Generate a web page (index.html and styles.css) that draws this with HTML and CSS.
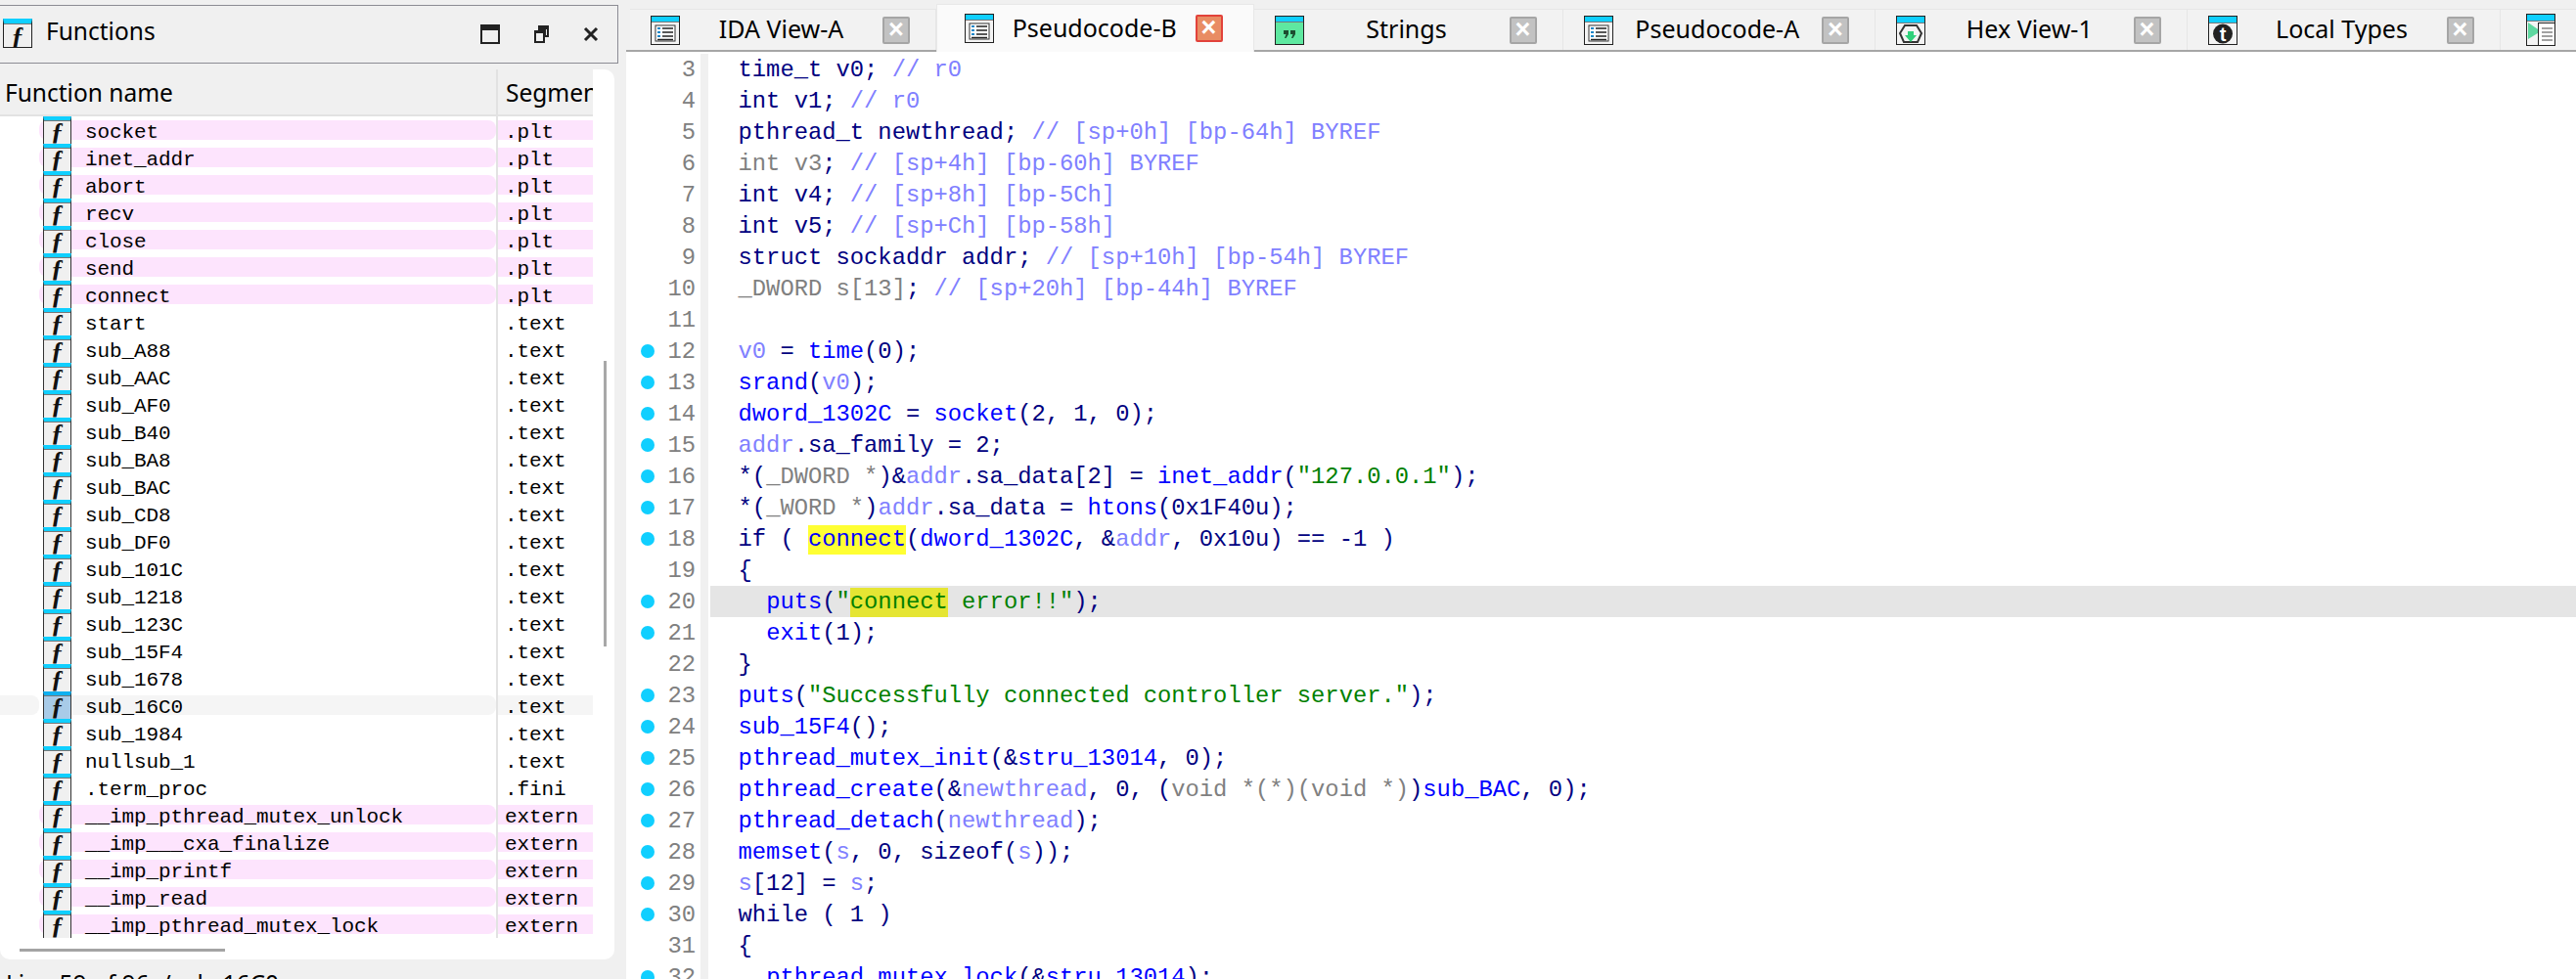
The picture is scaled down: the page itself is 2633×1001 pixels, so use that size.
FILE: index.html
```html
<!DOCTYPE html>
<html>
<head>
<meta name="viewport" content="width=device-width, initial-scale=1">
<title>Pseudocode-B</title>
<link rel="stylesheet" href="styles.css">
</head>
<body>

<svg class="defs" width="0" height="0">
  <symbol id="i-code" viewBox="0 0 30 30">
    <rect x=".5" y=".5" width="29" height="29" fill="#f4f4f4" stroke="#222"/>
    <rect x="1" y="1" width="28" height="5" fill="#10cfff"/>
    <rect x="1" y="6" width="28" height="1" fill="#777"/>
    <rect x="5" y="10" width="20" height="16" fill="#fff" stroke="#333"/>
    <path d="M7 13h3M7 17h3M7 21h3" stroke="#1a86c8" stroke-width="2"/>
    <path d="M12 13h11M12 17h11M12 21h11M7 24.500h16" stroke="#222" stroke-width="1.600"/>
  </symbol>
  <symbol id="i-str" viewBox="0 0 30 30">
    <rect x=".5" y=".5" width="29" height="29" fill="#5ee8a0" stroke="#222"/>
    <rect x="1" y="1" width="28" height="5" fill="#10cfff"/>
    <rect x="1" y="6" width="28" height="1" fill="#777"/>
    <path d="M9 15h5v4l-2.500 4H10l1.500-4H9zM16 15h5v4l-2.500 4H17l1.500-4H16z" fill="#1d4d30"/>
  </symbol>
  <symbol id="i-hex" viewBox="0 0 30 30">
    <rect x=".5" y=".5" width="29" height="29" fill="#f4f4f4" stroke="#222"/>
    <rect x="1" y="1" width="28" height="6" fill="#10cfff"/>
    <rect x="1" y="7" width="28" height="1" fill="#777"/>
    <path d="M9 10h12l5 8-4 9H8l-4-9z" fill="none" stroke="#333" stroke-width="2"/>
    <path d="M12 16h6v4h3l-6 7-6-7h3z" fill="#2fd07a"/>
  </symbol>
  <symbol id="i-type" viewBox="0 0 30 30">
    <rect x=".5" y=".5" width="29" height="29" fill="#f4f4f4" stroke="#222"/>
    <rect x="1" y="1" width="28" height="6" fill="#10cfff"/>
    <rect x="1" y="7" width="28" height="1" fill="#777"/>
    <circle cx="15" cy="18.500" r="10" fill="#222"/>
    <text x="15" y="26" class="type-t">t</text>
  </symbol>
  <symbol id="i-last" viewBox="0 0 30 34">
    <rect x=".5" y=".5" width="29" height="32" fill="#f4f4f4" stroke="#222"/>
    <rect x="1" y="1" width="28" height="6" fill="#10cfff"/>
    <rect x="1" y="7" width="28" height="1" fill="#777"/>
    <path d="M2 9l13 9-13 8z" fill="#5ed8a0"/>
    <rect x="12.500" y="9.500" width="17" height="23" fill="#fff" stroke="#222"/>
    <path d="M16 15h11M16 19h11M16 23h11M16 27h11" stroke="#444" stroke-width="1"/>
  </symbol>
</svg>

<div class="left">
  <div class="titlebar">
    <span class="ficon big">ƒ</span>
    <span class="title">Functions</span>
    <div class="winbtns">
      <span class="btn-max"></span>
      <svg class="btn-restore" width="15" height="18" viewBox="0 0 15 18"><path d="M5 1h9v10h-3V5H5zM1 6h9v11H1z" fill="none" stroke="#222" stroke-width="2"/><path d="M5 2h9v2H5zM1 6h9v2H1z" fill="#222"/></svg>
      <svg class="btn-close" width="16" height="16" viewBox="0 0 16 16"><path d="M2 2l12 12M14 2L2 14" stroke="#222" stroke-width="3"/></svg>
    </div>
  </div>

  <div class="panel">
    <div class="head">
      <div class="head-name">Function name</div>
      <div class="head-seg">Segmen</div>
    </div>
    <div class="list">
      <div class="row lib"><span class="ficon">ƒ</span><span class="name">socket</span><span class="seg">.plt</span></div>
      <div class="row lib"><span class="ficon">ƒ</span><span class="name">inet_addr</span><span class="seg">.plt</span></div>
      <div class="row lib"><span class="ficon">ƒ</span><span class="name">abort</span><span class="seg">.plt</span></div>
      <div class="row lib"><span class="ficon">ƒ</span><span class="name">recv</span><span class="seg">.plt</span></div>
      <div class="row lib"><span class="ficon">ƒ</span><span class="name">close</span><span class="seg">.plt</span></div>
      <div class="row lib"><span class="ficon">ƒ</span><span class="name">send</span><span class="seg">.plt</span></div>
      <div class="row lib"><span class="ficon">ƒ</span><span class="name">connect</span><span class="seg">.plt</span></div>
      <div class="row"><span class="ficon">ƒ</span><span class="name">start</span><span class="seg">.text</span></div>
      <div class="row"><span class="ficon">ƒ</span><span class="name">sub_A88</span><span class="seg">.text</span></div>
      <div class="row"><span class="ficon">ƒ</span><span class="name">sub_AAC</span><span class="seg">.text</span></div>
      <div class="row"><span class="ficon">ƒ</span><span class="name">sub_AF0</span><span class="seg">.text</span></div>
      <div class="row"><span class="ficon">ƒ</span><span class="name">sub_B40</span><span class="seg">.text</span></div>
      <div class="row"><span class="ficon">ƒ</span><span class="name">sub_BA8</span><span class="seg">.text</span></div>
      <div class="row"><span class="ficon">ƒ</span><span class="name">sub_BAC</span><span class="seg">.text</span></div>
      <div class="row"><span class="ficon">ƒ</span><span class="name">sub_CD8</span><span class="seg">.text</span></div>
      <div class="row"><span class="ficon">ƒ</span><span class="name">sub_DF0</span><span class="seg">.text</span></div>
      <div class="row"><span class="ficon">ƒ</span><span class="name">sub_101C</span><span class="seg">.text</span></div>
      <div class="row"><span class="ficon">ƒ</span><span class="name">sub_1218</span><span class="seg">.text</span></div>
      <div class="row"><span class="ficon">ƒ</span><span class="name">sub_123C</span><span class="seg">.text</span></div>
      <div class="row"><span class="ficon">ƒ</span><span class="name">sub_15F4</span><span class="seg">.text</span></div>
      <div class="row"><span class="ficon">ƒ</span><span class="name">sub_1678</span><span class="seg">.text</span></div>
      <div class="row sel"><span class="ficon">ƒ</span><span class="name">sub_16C0</span><span class="seg">.text</span></div>
      <div class="row"><span class="ficon">ƒ</span><span class="name">sub_1984</span><span class="seg">.text</span></div>
      <div class="row"><span class="ficon">ƒ</span><span class="name">nullsub_1</span><span class="seg">.text</span></div>
      <div class="row"><span class="ficon">ƒ</span><span class="name">.term_proc</span><span class="seg">.fini</span></div>
      <div class="row lib"><span class="ficon">ƒ</span><span class="name">__imp_pthread_mutex_unlock</span><span class="seg">extern</span></div>
      <div class="row lib"><span class="ficon">ƒ</span><span class="name">__imp___cxa_finalize</span><span class="seg">extern</span></div>
      <div class="row lib"><span class="ficon">ƒ</span><span class="name">__imp_printf</span><span class="seg">extern</span></div>
      <div class="row lib"><span class="ficon">ƒ</span><span class="name">__imp_read</span><span class="seg">extern</span></div>
      <div class="row lib"><span class="ficon">ƒ</span><span class="name">__imp_pthread_mutex_lock</span><span class="seg">extern</span></div>
    </div>
    <div class="vscroll"></div>
    <div class="hscroll"></div>
  </div>
  <div class="status">Line 59 of 96, /sub_16C0</div>
</div>

<div class="right">
  <div class="tabs">
    <div class="tab"><svg class="ticon"><use href="#i-code"/></svg><span class="label">IDA View-A</span><span class="close">×</span></div>
    <div class="tab active"><svg class="ticon"><use href="#i-code"/></svg><span class="label">Pseudocode-B</span><span class="close">×</span></div>
    <div class="tab"><svg class="ticon"><use href="#i-str"/></svg><span class="label">Strings</span><span class="close">×</span></div>
    <div class="tab"><svg class="ticon"><use href="#i-code"/></svg><span class="label">Pseudocode-A</span><span class="close">×</span></div>
    <div class="tab"><svg class="ticon"><use href="#i-hex"/></svg><span class="label">Hex View-1</span><span class="close">×</span></div>
    <div class="tab"><svg class="ticon"><use href="#i-type"/></svg><span class="label">Local Types</span><span class="close">×</span></div>
    <div class="tab"><svg class="ticon wide"><use href="#i-last"/></svg></div>
  </div>

  <div class="code">
    <div class="line"><i></i><b>3</b><pre>  time_t v0; <em>// r0</em></pre></div>
    <div class="line"><i></i><b>4</b><pre>  int v1; <em>// r0</em></pre></div>
    <div class="line"><i></i><b>5</b><pre>  pthread_t newthread; <em>// [sp+0h] [bp-64h] BYREF</em></pre></div>
    <div class="line"><i></i><b>6</b><pre>  <u>int v3</u>; <em>// [sp+4h] [bp-60h] BYREF</em></pre></div>
    <div class="line"><i></i><b>7</b><pre>  int v4; <em>// [sp+8h] [bp-5Ch]</em></pre></div>
    <div class="line"><i></i><b>8</b><pre>  int v5; <em>// [sp+Ch] [bp-58h]</em></pre></div>
    <div class="line"><i></i><b>9</b><pre>  struct sockaddr addr; <em>// [sp+10h] [bp-54h] BYREF</em></pre></div>
    <div class="line"><i></i><b>10</b><pre>  <u>_DWORD s[13]</u>; <em>// [sp+20h] [bp-44h] BYREF</em></pre></div>
    <div class="line"><i></i><b>11</b><pre></pre></div>
    <div class="line on"><i></i><b>12</b><pre>  <em>v0</em> = <s>time</s>(0);</pre></div>
    <div class="line on"><i></i><b>13</b><pre>  <s>srand</s>(<em>v0</em>);</pre></div>
    <div class="line on"><i></i><b>14</b><pre>  <s>dword_1302C</s> = <s>socket</s>(2, 1, 0);</pre></div>
    <div class="line on"><i></i><b>15</b><pre>  <em>addr</em>.sa_family = 2;</pre></div>
    <div class="line on"><i></i><b>16</b><pre>  *(<u>_DWORD *</u>)&amp;<em>addr</em>.sa_data[2] = <s>inet_addr</s>(<q>"127.0.0.1"</q>);</pre></div>
    <div class="line on"><i></i><b>17</b><pre>  *(<u>_WORD *</u>)<em>addr</em>.sa_data = <s>htons</s>(0x1F40u);</pre></div>
    <div class="line on"><i></i><b>18</b><pre>  if ( <s><mark>connect</mark></s>(<s>dword_1302C</s>, &amp;<em>addr</em>, 0x10u) == -1 )</pre></div>
    <div class="line"><i></i><b>19</b><pre>  {</pre></div>
    <div class="line on cur"><i></i><b>20</b><pre>    <s>puts</s>(<q>"<mark>connect</mark> error!!"</q>);</pre></div>
    <div class="line on"><i></i><b>21</b><pre>    <s>exit</s>(1);</pre></div>
    <div class="line"><i></i><b>22</b><pre>  }</pre></div>
    <div class="line on"><i></i><b>23</b><pre>  <s>puts</s>(<q>"Successfully connected controller server."</q>);</pre></div>
    <div class="line on"><i></i><b>24</b><pre>  <s>sub_15F4</s>();</pre></div>
    <div class="line on"><i></i><b>25</b><pre>  <s>pthread_mutex_init</s>(&amp;<s>stru_13014</s>, 0);</pre></div>
    <div class="line on"><i></i><b>26</b><pre>  <s>pthread_create</s>(&amp;<em>newthread</em>, 0, (<u>void *(*)(void *)</u>)<s>sub_BAC</s>, 0);</pre></div>
    <div class="line on"><i></i><b>27</b><pre>  <s>pthread_detach</s>(<em>newthread</em>);</pre></div>
    <div class="line on"><i></i><b>28</b><pre>  <s>memset</s>(<em>s</em>, 0, sizeof(<em>s</em>));</pre></div>
    <div class="line on"><i></i><b>29</b><pre>  <em>s</em>[12] = <em>s</em>;</pre></div>
    <div class="line on"><i></i><b>30</b><pre>  while ( 1 )</pre></div>
    <div class="line"><i></i><b>31</b><pre>  {</pre></div>
    <div class="line on"><i></i><b>32</b><pre>    <s>pthread_mutex_lock</s>(&amp;<s>stru_13014</s>);</pre></div>
  </div>
</div>

</body>
</html>
```
FILE: styles.css
```css
* {box-sizing: border-box}
html, body {
  height: 100%;
  margin: 0;
  overflow: hidden;
}
body {
  display: flex;
  background-color: #f0f0f0;
  font-family: "Noto Sans", sans-serif;
  font-size: 25px;
  color: #000;
}
.defs {
  position: absolute;
}
.type-t {
  font-family: "Liberation Sans", sans-serif;
  font-size: 20px;
  font-weight: bold;
  fill: #fff;
  text-anchor: middle;
}

/* Functions pane */
.left {
  width: 640px;
  flex: none;
  padding-top: 5px;
  font-size: 24.500px;
}
.titlebar {
  display: flex;
  align-items: center;
  width: 632px;
  height: 60px;
  border: 1px solid #8c8c94;
  border-left: none;
  padding-left: 3px;
}
.title {
  margin-left: 14px;
  line-height: 1;
  padding-bottom: 5px;
}
.winbtns {
  display: flex;
  align-items: center;
  gap: 35px;
  margin-left: auto;
  margin-right: 19px;
}
.btn-max {
  width: 20px;
  height: 20px;
  border: 2px solid #222;
  border-top-width: 6px;
}
.ficon {
  display: block;
  position: relative;
  z-index: 1;
  flex: none;
  width: 29px;
  height: 28px;
  background-color: #f0f0f0;
  border-left: 1px solid #333;
  border-right: 1px solid #333;
  border-top: 4px solid #10cfff;
  box-shadow: inset 0 1px 0 #777;
  font-family: "Liberation Serif", serif;
  font-size: 26px;
  font-style: italic;
  font-weight: bold;
  line-height: 24px;
  text-align: center;
  color: #111;
}
.ficon.big {
  width: 30px;
  height: 30px;
  border: 1px solid #222;
  border-top: 5px solid #10cfff;
  line-height: 26px;
  margin-bottom: 2px;
}
.panel {
  position: relative;
  width: 628px;
  height: 910px;
  margin-top: 6px;
  background-color: #fff;
  border-radius: 0 10px 10px 10px;
  overflow: hidden;
}
.head {
  display: flex;
  width: 606px;
  height: 48px;
  background-color: #f0f0f0;
  border-bottom: 2px solid #e2e2e2;
  line-height: 47px;
  overflow: hidden;
}
.head-name {
  flex: none;
  width: 507px;
  padding-left: 5px;
}
.head-seg {
  flex: none;
  width: 99px;
  padding-left: 8px;
  border-left: 2px solid #e2e2e2;
}
.list {
  width: 606px;
  height: 840px;
  overflow: hidden;
  font-family: "Liberation Mono", monospace;
  font-size: 21px;
  letter-spacing: -0.1px;
}
.row {
  display: flex;
  position: relative;
  height: 28px;
  padding-left: 44px;
}
.name {
  flex: none;
  width: 434px;
  height: 20px;
  margin-top: 4px;
  padding-left: 14px;
  line-height: 26px;
  border-radius: 0 8px 8px 0;
  white-space: pre;
}
.seg {
  flex: 1;
  height: 20px;
  margin-top: 4px;
  padding-left: 7px;
  line-height: 26px;
  border-left: 2px solid #e3e3e3;
  position: relative;
}
.seg::before {
  content: "";
  position: absolute;
  left: -2px;
  top: -4px;
  width: 2px;
  height: 28px;
  background-color: #e3e3e3;
}
.lib .name, .lib .seg {
  background-color: #fde4fd;
}
.lib::before {
  content: "";
  position: absolute;
  left: 40px;
  top: 4px;
  width: 8px;
  height: 20px;
  border-radius: 8px 0 0 8px;
  background-color: #fde4fd;
}
.sel .name, .sel .seg {
  background-color: #f5f5f5;
}
.sel::before {
  content: "";
  position: absolute;
  left: 0;
  top: 4px;
  width: 40px;
  height: 20px;
  border-radius: 0 8px 8px 0;
  background-color: #f5f5f5;
}
.sel .ficon {
  background-color: #a8cbe8;
  border-top-color: #10b0f0;
}
.vscroll {
  position: absolute;
  left: 617px;
  top: 298px;
  width: 3px;
  height: 292px;
  background-color: #a8a8a8;
}
.hscroll {
  position: absolute;
  left: 20px;
  top: 899px;
  width: 210px;
  height: 3px;
  background-color: #a4a4a4;
}
.status {
  padding-left: 6px;
  margin-top: 8px;
  line-height: 34px;
}

/* Tabs */
.right {
  flex: 1;
  min-width: 0;
  display: flex;
  flex-direction: column;
}
.tabs {
  display: grid;
  grid-template-columns: 313px 324.5px 316px 319.5px 318.5px 320px 1fr;
  align-items: end;
  height: 53px;
  flex: none;
  padding-left: 4px;
  border-bottom: 2px solid #a6a6a6;
}
.tab {
  display: flex;
  align-items: center;
  height: 42px;
  padding: 0 26px 0 21px;
  background-color: #f2f2f2;
  border-top: 1px solid #e6e6e6;
  border-right: 1px solid #e6e6e6;
}
.tab.active {
  height: 49px;
  margin-bottom: -2px;
  padding: 0 31px 0 28px;
  background-color: #fafafa;
  border: 1px solid #e8e8e8;
  border-bottom: none;
  position: relative;
}
.ticon {
  width: 30px;
  height: 30px;
  flex: none;
}
.ticon.wide {
  height: 34px;
  margin-left: 5px;
}
.label {
  flex: 1;
  text-align: center;
  line-height: 1;
  padding-bottom: 2px;
  white-space: nowrap;
}
.close {
  flex: none;
  width: 28px;
  height: 28px;
  background-color: #c2c2c2;
  border: 2px solid #a5a5a5;
  border-radius: 2px;
  color: #fff;
  font-family: "Liberation Sans", sans-serif;
  font-size: 27px;
  font-weight: bold;
  line-height: 23px;
  text-align: center;
}
.active .close {
  background-color: #e98c63;
  border-color: #e2423a;
}

/* Code view */
.code {
  flex: 1;
  min-height: 0;
  overflow: hidden;
  padding-top: 2px;
  background-color: #fff;
  font-family: "Liberation Mono", monospace;
  font-size: 23.800px;
  color: #000080;
}
.line {
  display: flex;
  height: 32px;
  line-height: 32px;
}
.line i {
  flex: none;
  width: 14px;
  height: 14px;
  margin: 9px 0 0 15px;
  border-radius: 50%;
}
.line.on i {
  background-color: #10cfff;
}
.line b {
  flex: none;
  width: 42px;
  padding-top: 1px;
  font-weight: normal;
  text-align: right;
  color: #808080;
}
.line pre {
  flex: 1;
  margin: 0 0 0 5px;
  padding: 1px 0 0 10px;
  font: inherit;
  background: linear-gradient(to right, #f0f0f0 8px, #fff 8px);
}
.line.cur pre {
  background: linear-gradient(to right, #f0f0f0 8px, #fff 8px, #fff 10px, #e5e5e5 10px);
}
.line em {
  font-style: normal;
  color: #8080ff;
}
.line u {
  text-decoration: none;
  color: #808080;
}
.line s {
  text-decoration: none;
  color: #0000ff;
}
.line q {
  quotes: none;
  color: #008000;
}
mark {
  display: inline-block;
  line-height: 30px;
  padding-bottom: 2px;
  background-color: #ffff33;
  color: inherit;
}
.cur mark {
  background-color: #e5e533;
}
```
